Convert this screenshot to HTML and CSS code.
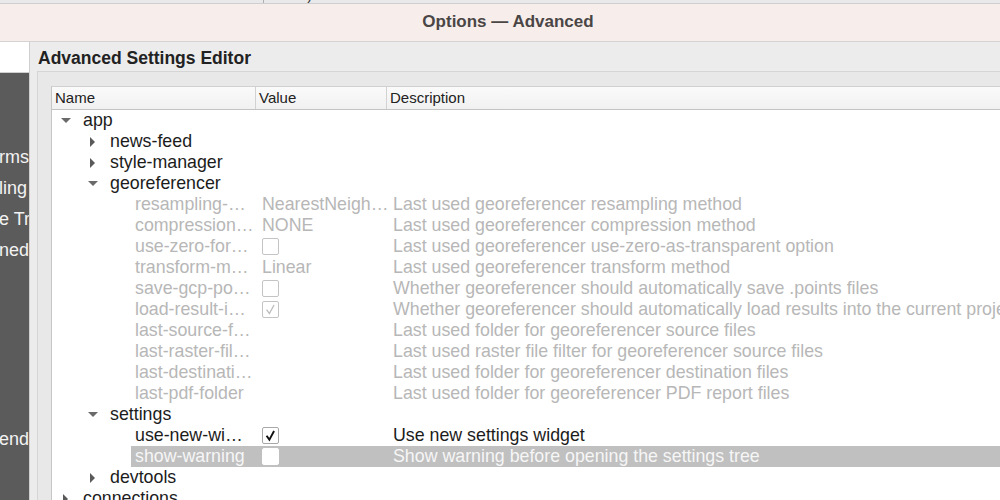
FILE: index.html
```html
<!DOCTYPE html>
<html>
<head>
<meta charset="utf-8">
<link rel="stylesheet" href="styles.css">
</head>
<body>
<div class="topstrip"><div class="strip-cell">Width)</div></div>
<div class="titlebar">Options — Advanced</div>
<div class="main">
  <aside class="sidebar">
    <div class="search"></div>
    <div class="nav">
      <div class="nav-item">rms</div>
      <div class="nav-item">ling</div>
      <div class="nav-item">e Tra</div>
      <div class="nav-item">ned (</div>
      <div class="nav-item"></div>
      <div class="nav-item"></div>
      <div class="nav-item"></div>
      <div class="nav-item"></div>
      <div class="nav-item"></div>
      <div class="nav-item nav-last">end</div>
    </div>
  </aside>
  <section class="content">
    <h1 class="heading">Advanced Settings Editor</h1>
    <div class="groupbox">
      <div class="tree">
        <div class="thead">
          <div class="th">Name</div>
          <div class="th">Value</div>
          <div class="th th-last">Description</div>
        </div>
        <div class="row"><div class="name l0"><span class="arrow down"></span>app</div><div class="val"></div><div class="desc"></div></div>
        <div class="row"><div class="name l1"><span class="arrow right"></span>news-feed</div><div class="val"></div><div class="desc"></div></div>
        <div class="row"><div class="name l1"><span class="arrow right"></span>style-manager</div><div class="val"></div><div class="desc"></div></div>
        <div class="row"><div class="name l1"><span class="arrow down"></span>georeferencer</div><div class="val"></div><div class="desc"></div></div>
        <div class="row dis"><div class="name l2">resampling-…</div><div class="val">NearestNeigh…</div><div class="desc">Last used georeferencer resampling method</div></div>
        <div class="row dis"><div class="name l2">compression…</div><div class="val">NONE</div><div class="desc">Last used georeferencer compression method</div></div>
        <div class="row dis"><div class="name l2">use-zero-for…</div><div class="val"><span class="cb"></span></div><div class="desc">Last used georeferencer use-zero-as-transparent option</div></div>
        <div class="row dis"><div class="name l2">transform-m…</div><div class="val">Linear</div><div class="desc">Last used georeferencer transform method</div></div>
        <div class="row dis"><div class="name l2">save-gcp-po…</div><div class="val"><span class="cb"></span></div><div class="desc">Whether georeferencer should automatically save .points files</div></div>
        <div class="row dis"><div class="name l2">load-result-i…</div><div class="val"><span class="cb"><svg viewBox="0 0 16 16" class="check"><path d="M3.8 8.2 L6.8 12.4 L11.8 3.2"/></svg></span></div><div class="desc">Whether georeferencer should automatically load results into the current project</div></div>
        <div class="row dis"><div class="name l2">last-source-f…</div><div class="val"></div><div class="desc">Last used folder for georeferencer source files</div></div>
        <div class="row dis"><div class="name l2">last-raster-fil…</div><div class="val"></div><div class="desc">Last used raster file filter for georeferencer source files</div></div>
        <div class="row dis"><div class="name l2">last-destinati…</div><div class="val"></div><div class="desc">Last used folder for georeferencer destination files</div></div>
        <div class="row dis"><div class="name l2">last-pdf-folder</div><div class="val"></div><div class="desc">Last used folder for georeferencer PDF report files</div></div>
        <div class="row"><div class="name l1"><span class="arrow down"></span>settings</div><div class="val"></div><div class="desc"></div></div>
        <div class="row"><div class="name l2">use-new-wi…</div><div class="val"><span class="cb on"><svg viewBox="0 0 16 16" class="check"><path d="M3.8 8.2 L6.8 12.4 L11.8 3.2"/></svg></span></div><div class="desc">Use new settings widget</div></div>
        <div class="row sel"><div class="name l2">show-warning</div><div class="val"><span class="cb white"></span></div><div class="desc">Show warning before opening the settings tree</div></div>
        <div class="row"><div class="name l1"><span class="arrow right"></span>devtools</div><div class="val"></div><div class="desc"></div></div>
        <div class="row"><div class="name l0"><span class="arrow right"></span>connections</div><div class="val"></div><div class="desc"></div></div>
      </div>
    </div>
  </section>
</div>
</body>
</html>
```

FILE: styles.css
```css
html, body {
  margin: 0;
  padding: 0;
}
body {
  width: 1000px;
  height: 500px;
  overflow: hidden;
  background: #ececec;
  font-family: "Liberation Sans", Arial, sans-serif;
  color: #1c1c1c;
}
.topstrip {
  height: 3px;
  background: #e9e9e9;
  border-bottom: 1px solid #cfcfcf;
  overflow: hidden;
  display: flex;
}
.strip-cell {
  margin-left: 263px;
  padding-left: 5px;
  border-left: 1px solid #b0b0b0;
  font-size: 15px;
  line-height: 15px;
  margin-top: -13px;
  color: #333;
}
.titlebar {
  height: 38px;
  box-sizing: border-box;
  padding-bottom: 1px;
  background: #f7eeec;
  border-bottom: 1px solid #d3d3d3;
  display: flex;
  align-items: center;
  justify-content: center;
  padding-left: 16px;
  font-size: 17px;
  font-weight: bold;
  color: #4b4646;
}
.main {
  display: flex;
  height: 458px;
}
.sidebar {
  width: 29px;
  border-right: 1px solid #cfcfcf;
  display: flex;
  flex-direction: column;
  flex-shrink: 0;
}
.search {
  height: 30px;
  background: #ffffff;
  border-bottom: 1px solid #d0d0d0;
}
.nav {
  flex: 1;
  background: #5b5b5b;
  padding-top: 69px;
  overflow: hidden;
}
.nav-item {
  height: 31px;
  line-height: 31px;
  font-size: 18px;
  color: #f2f2f2;
  white-space: nowrap;
  overflow: hidden;
  margin-left: -1px;
}
.nav-last {
  margin-top: 3px;
}
.content {
  flex: 1;
  display: flex;
  flex-direction: column;
  min-width: 0;
}
.heading {
  margin: 0;
  height: 29px;
  box-sizing: border-box;
  padding-top: 4px;
  padding-left: 8px;
  display: flex;
  align-items: center;
  font-size: 17.5px;
  font-weight: bold;
  color: #222;
}
.groupbox {
  flex: 1;
  margin-left: 7px;
  background: #e8e8e8;
  border-top: 1px solid #d5d5d5;
  border-left: 1px solid #d5d5d5;
  padding: 14px 0 0 13px;
  overflow: hidden;
}
.tree {
  background: #ffffff;
  border-left: 1px solid #c6c6c6;
  border-top: 1px solid #d0d0d0;
  height: 100%;
  width: 1000px;
}
.thead {
  height: 22px;
  display: grid;
  grid-template-columns: 204px 131px 1fr;
  background: linear-gradient(#fafafa, #f1f1f1);
  border-bottom: 1px solid #c3c3c3;
}
.th {
  border-right: 1px solid #d2d2d2;
  padding-left: 3px;
  font-size: 15px;
  line-height: 22px;
  color: #222;
}
.th-last {
  border-right: none;
}
.row {
  height: 21px;
  display: grid;
  grid-template-columns: 204px 132px 1fr;
  align-items: center;
  font-size: 17.8px;
  white-space: nowrap;
}
.row > div {
  overflow: hidden;
  display: flex;
  align-items: center;
  height: 21px;
}
.name.l0 { padding-left: 9px; }
.name.l1 { padding-left: 36px; }
.name.l2 { padding-left: 83px; }
.val { padding-left: 6px; }
.desc { padding-left: 5px; }
.arrow {
  width: 22px;
  height: 10px;
  flex-shrink: 0;
  position: relative;
}
.arrow::before {
  content: "";
  position: absolute;
  width: 0;
  height: 0;
}
.arrow.down::before {
  left: 0;
  top: 2px;
  border-left: 5px solid transparent;
  border-right: 5px solid transparent;
  border-top: 5px solid #6a6a6a;
}
.arrow.right::before {
  left: 2px;
  top: 0;
  border-top: 5px solid transparent;
  border-bottom: 5px solid transparent;
  border-left: 5px solid #5a5a5a;
}
.row.dis {
  color: #b7b7b7;
}
.row.sel {
  background: linear-gradient(to right, transparent 79px, #c0c0c0 79px);
  color: #f6f6f6;
}
.cb {
  width: 15px;
  height: 15px;
  border: 1px solid #c4c4c4;
  border-radius: 2px;
  background: #ffffff;
  display: flex;
  align-items: center;
  justify-content: center;
}
.cb.on {
  border-color: #a8a8a8;
}
.cb.white {
  border-color: #ffffff;
}
.check {
  width: 15px;
  height: 15px;
  fill: none;
  stroke: #bdbdbd;
  stroke-width: 1.4;
}
.cb.on .check {
  stroke: #111;
  stroke-width: 2;
}
```
